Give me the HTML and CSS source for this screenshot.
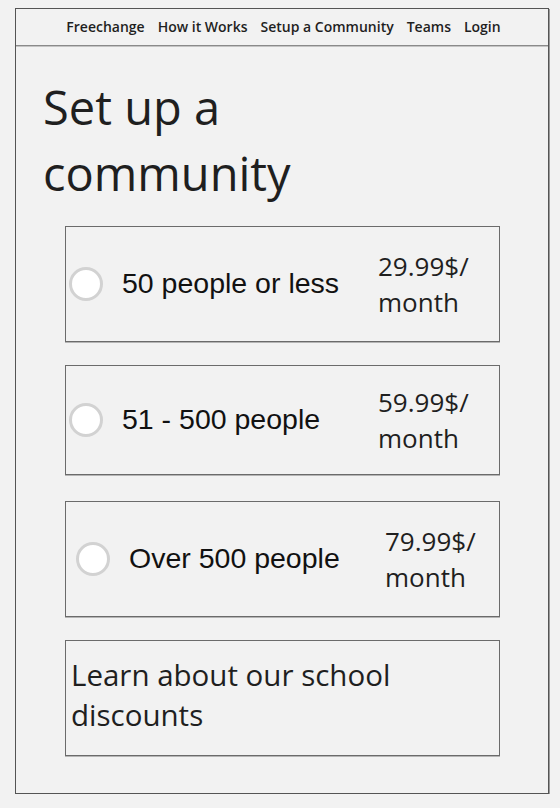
FILE: index.html
```html
<!DOCTYPE html>
<html lang="en">
<head>
<meta charset="utf-8">
<title>Set up a community</title>
<link rel="stylesheet" href="styles.css">
</head>
<body>
<div class="frame">
  <nav class="nav">
    <a class="nav-link" href="#">Freechange</a>
    <a class="nav-link" href="#">How it Works</a>
    <a class="nav-link" href="#">Setup a Community</a>
    <a class="nav-link" href="#">Teams</a>
    <a class="nav-link" href="#">Login</a>
  </nav>
  <main class="content">
    <h1 class="title">Set up a<br>community</h1>
    <div class="plans">
      <label class="plan plan-tall">
        <span class="radio"></span>
        <span class="plan-name">50 people or less</span>
        <span class="plan-price">29.99$/<br>month</span>
      </label>
      <label class="plan plan-short">
        <span class="radio"></span>
        <span class="plan-name">51 - 500 people</span>
        <span class="plan-price">59.99$/<br>month</span>
      </label>
      <label class="plan plan-tall plan-shift">
        <span class="radio"></span>
        <span class="plan-name">Over 500 people</span>
        <span class="plan-price">79.99$/<br>month</span>
      </label>
      <a class="school" href="#">Learn about our school discounts</a>
    </div>
  </main>
</div>
</body>
</html>
```

FILE: styles.css
```css
html, body {
  margin: 0;
  padding: 0;
  background: #f2f2f2;
}

body {
  padding: 8px 11px 0 15px;
  font-family: "Open Sans", "DejaVu Sans", sans-serif;
  color: #1f1f1f;
}

.frame {
  width: 532px;
  height: 784px;
  border: 1px solid #555;
  box-shadow: 1px 1px 0 #9a9a9a;
  box-sizing: content-box;
}

.nav {
  height: 36px;
  display: flex;
  justify-content: center;
  align-items: center;
  gap: 13px;
  border-bottom: 1px solid #8a8a8a;
  box-shadow: 0 1px 0 #c4c4c4;
  padding-left: 3px;
}

.nav-link {
  font-size: 14px;
  font-weight: 600;
  color: #1f1f1f;
  text-decoration: none;
  margin-top: -1px;
}

.content {
  padding: 28px 0 0 27px;
}

.title {
  margin: 0;
  font-size: 47px;
  font-weight: 400;
  line-height: 66px;
  color: #1f1f1f;
}

.plans {
  margin: 20px 0 0 22px;
  width: 435px;
  display: flex;
  flex-direction: column;
  gap: 23px;
}

.plan {
  display: flex;
  align-items: center;
  border: 1px solid #6b6b6b;
  box-shadow: 0 1px 0 #b5b5b5;
  padding: 0 0 0 3px;
  height: 114px;
  box-sizing: content-box;
  cursor: pointer;
}

.plan-short {
  height: 108px;
}

.plan-shift {
  padding-left: 10px;
  margin-top: 3px;
}

.radio {
  flex: 0 0 auto;
  width: 28px;
  height: 28px;
  border: 3px solid #d2d2d2;
  border-radius: 50%;
  background: #fff;
}

.plan-name {
  flex: 0 0 256px;
  margin-left: 19px;
  font-family: "Liberation Sans", Arial, sans-serif;
  font-size: 28.5px;
  color: #111;
  margin-top: -1px;
}

.plan-price {
  font-size: 26px;
  line-height: 36px;
  color: #1f1f1f;
}

.school {
  display: block;
  border: 1px solid #6b6b6b;
  box-shadow: 0 1px 0 #b5b5b5;
  height: 114px;
  box-sizing: content-box;
  padding: 0 0 0 5px;
  font-size: 29.5px;
  line-height: 40px;
  color: #1f1f1f;
  text-decoration: none;
}

.school::before {
  content: "";
  display: block;
  height: 14px;
}
```
